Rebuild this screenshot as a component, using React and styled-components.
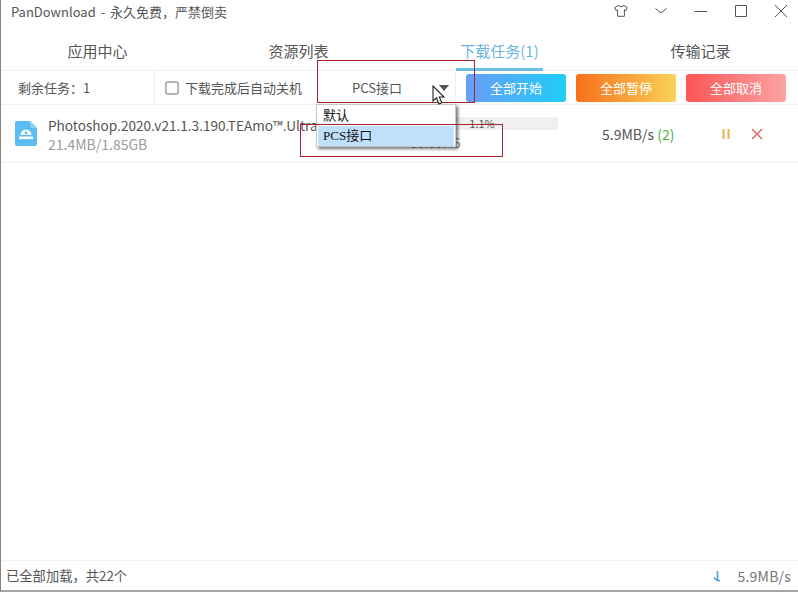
import React from "react";
import styled, { createGlobalStyle } from "styled-components";

const GlobalStyle = createGlobalStyle`
  html, body {
    margin: 0;
    padding: 0;
    background: #fff;
  }
  * {
    box-sizing: border-box;
  }
`;

const tabs = [
  { label: "应用中心" },
  { label: "资源列表" },
  { label: "下载任务(1)", active: true },
  { label: "传输记录" },
];

const bulkActions = [
  { label: "全部开始", from: "#6a9cf5", to: "#1fcdf8" },
  { label: "全部暂停", from: "#f96f1b", to: "#f9d258" },
  { label: "全部取消", from: "#fb5555", to: "#fda3a3" },
];

function App() {
  return (
    <Window>
      <GlobalStyle />
      <TitleBar>
        <Title>PanDownload - 永久免费，严禁倒卖</Title>
        <WindowControls>
          <ControlIcon viewBox="0 0 16 16" width="16" height="16">
            <path d="M5 2.5 L1.8 4.6 L3 7.5 L4.6 6.8 V13.3 H11.4 V6.8 L13 7.5 L14.2 4.6 L11 2.5 Q8 5 5 2.5 Z" />
          </ControlIcon>
          <ControlIcon viewBox="0 0 16 16" width="16" height="16">
            <path d="M2.5 5.5 L8 10 L13.5 5.5" />
          </ControlIcon>
          <ControlIcon viewBox="0 0 16 16" width="16" height="16">
            <path d="M1.5 8.5 H14" />
          </ControlIcon>
          <ControlIcon viewBox="0 0 16 16" width="16" height="16">
            <path d="M2.5 2.5 H13.5 V13.5 H2.5 Z" />
          </ControlIcon>
          <ControlIcon viewBox="0 0 16 16" width="16" height="16">
            <path d="M2 2 L14 14 M14 2 L2 14" />
          </ControlIcon>
        </WindowControls>
      </TitleBar>

      <TabBar>
        {tabs.map((tab) => (
          <Tab key={tab.label} $active={tab.active}>
            <TabLabel $active={tab.active}>{tab.label}</TabLabel>
          </Tab>
        ))}
      </TabBar>

      <Toolbar>
        <Remaining>剩余任务：1</Remaining>
        <ShutdownOption>
          <CheckBox />
          下载完成后自动关机
        </ShutdownOption>
        <SourceSelect>
          <SourceValue>PCS接口</SourceValue>
          <SelectArrow />
        </SourceSelect>
        <Actions>
          {bulkActions.map((action) => (
            <ActionButton key={action.label} $from={action.from} $to={action.to}>
              {action.label}
            </ActionButton>
          ))}
        </Actions>
      </Toolbar>

      <TaskRow>
        <FileIcon viewBox="0 0 22 25" width="22" height="25">
          <path
            d="M2 0 H15 L22 7 V23 Q22 25 20 25 H2 Q0 25 0 23 V2 Q0 0 2 0 Z"
            fill="#5cbdf3"
          />
          <path d="M15 0 L22 7 H17 Q15 7 15 5 Z" fill="#8dd3f8" />
          <path d="M5.5 14 A5.5 5.5 0 0 1 16.5 14 Z" fill="#fff" />
          <rect x="4" y="15.5" width="14" height="2.6" fill="#fff" />
          <circle cx="11" cy="12" r="1.4" fill="#5cbdf3" />
        </FileIcon>
        <FileInfo>
          <FileName>Photoshop.2020.v21.1.3.190.TEAmo™.UltraEdit.Setup.x64</FileName>
          <FileSize>21.4MB/1.85GB</FileSize>
        </FileInfo>
        <ProgressColumn>
          <ProgressTrack>
            <ProgressFill style={{ width: "1.1%" }} />
            <ProgressText>1.1%</ProgressText>
          </ProgressTrack>
          <TimeLeft>00:00:46</TimeLeft>
        </ProgressColumn>
        <Speed>
          5.9MB/s <Peers>(2)</Peers>
        </Speed>
        <RowActions>
          <RowIcon viewBox="0 0 12 12" width="12" height="12" $color="#eeb04e">
            <path d="M3.5 1 V11 M8.5 1 V11" />
          </RowIcon>
          <CancelIcon viewBox="0 0 12 12" width="12" height="12" $color="#ea6a6a">
            <path d="M1 1 L11 11 M11 1 L1 11" />
          </CancelIcon>
        </RowActions>
      </TaskRow>

      <Body />

      <StatusBar>
        <StatusText>已全部加载，共22个</StatusText>
        <StatusSpeed>
          <svg viewBox="0 0 10 12" width="10" height="12">
            <path
              d="M5.5 1 V10 M2 7.5 L5 10.5 H8"
              fill="none"
              stroke="#4aa3cf"
              strokeWidth="1.6"
            />
          </svg>
          <StatusValue>5.9MB/s</StatusValue>
        </StatusSpeed>
      </StatusBar>

      {/* 드롭다운 메뉴 */}
      <Dropdown>
        <DropdownItem>默认</DropdownItem>
        <DropdownItem $selected>PCS接口</DropdownItem>
      </Dropdown>

      {/* 빨간 표시 박스 */}
      <Mark $left={316} $top={60} $width={158} $height={43} />
      <Mark $left={299} $top={124} $width={203} $height={33} />

      <Cursor viewBox="0 0 14 22" width="14" height="22">
        <path
          d="M1 1 V16 L4.5 12.8 L7 19 L9.8 17.8 L7.3 12 H12 Z"
          fill="#fff"
          stroke="#222"
          strokeWidth="1.1"
        />
      </Cursor>
    </Window>
  );
}

const Window = styled.div`
  position: relative;
  width: 798px;
  height: 592px;
  display: flex;
  flex-direction: column;
  overflow: hidden;
  background: #fff;
  border-left: 1px solid #8d7f72;
  border-bottom: 2px solid #a5a5a5;
  font-family: "Noto Sans CJK SC", "Open Sans", sans-serif;
  color: #555;
`;

const TitleBar = styled.div`
  height: 30px;
  flex: none;
  display: flex;
  align-items: center;
  justify-content: space-between;
  padding: 0 9px 8px 10px;
`;

const Title = styled.div`
  font-size: 13px;
  word-spacing: 2px;
  color: #555;
`;

const WindowControls = styled.div`
  display: flex;
  align-items: center;
  gap: 24px;
`;

const ControlIcon = styled.svg`
  fill: none;
  stroke: #555;
  stroke-width: 1;
`;

const TabBar = styled.div`
  height: 41px;
  flex: none;
  margin-left: -4px;
  display: grid;
  grid-template-columns: repeat(4, 201px);
  border-bottom: 1px solid #efefef;
`;

const Tab = styled.div`
  display: flex;
  justify-content: center;
  font-size: 15px;
  color: ${(props) => (props.$active ? "#6db5e0" : "#555")};
`;

const TabLabel = styled.div`
  width: 87px;
  height: 41px;
  text-align: center;
  line-height: 41px;
  border-bottom: ${(props) => (props.$active ? "3px solid #6bbfe6" : "none")};
`;

const Toolbar = styled.div`
  height: 34px;
  flex: none;
  display: flex;
  align-items: center;
  border-bottom: 1px solid #efefef;
  font-size: 13px;
`;

const Remaining = styled.div`
  width: 154px;
  height: 100%;
  flex: none;
  display: flex;
  align-items: center;
  padding-left: 17px;
  border-right: 1px solid #efefef;
`;

const ShutdownOption = styled.label`
  width: 165px;
  flex: none;
  display: flex;
  align-items: center;
  gap: 6px;
  padding-left: 10px;
`;

const CheckBox = styled.span`
  width: 14px;
  height: 14px;
  flex: none;
  border: 2px solid #b5b5b5;
  border-radius: 2px;
`;

const SourceSelect = styled.div`
  width: 136px;
  height: 100%;
  flex: none;
  display: flex;
  align-items: center;
  justify-content: space-between;
  padding: 0 6px 0 32px;
  border-right: 1px solid #efefef;
`;

const SourceValue = styled.span`
  color: #555;
`;

const SelectArrow = styled.span`
  width: 0;
  height: 0;
  border-left: 5px solid transparent;
  border-right: 5px solid transparent;
  border-top: 6px solid #555;
`;

const Actions = styled.div`
  display: flex;
  gap: 10px;
  padding-left: 10px;
`;

const ActionButton = styled.div`
  width: 100px;
  height: 28px;
  border-radius: 3px;
  display: flex;
  align-items: center;
  justify-content: center;
  color: #fff;
  font-size: 13px;
  background: linear-gradient(90deg, ${(props) => props.$from}, ${(props) => props.$to});
`;

const TaskRow = styled.div`
  height: 58px;
  flex: none;
  display: flex;
  align-items: center;
  padding-left: 14px;
  border-bottom: 1px solid #efefef;
`;

const FileIcon = styled.svg`
  flex: none;
  margin-right: 11px;
`;

const FileInfo = styled.div`
  width: 340px;
  flex: none;
  overflow: hidden;
`;

const FileName = styled.div`
  font-size: 13.6px;
  line-height: 20px;
  white-space: nowrap;
  overflow: hidden;
  color: #555;
`;

const FileSize = styled.div`
  font-size: 14px;
  line-height: 18px;
  color: #9b9b9b;
`;

const ProgressColumn = styled.div`
  width: 152px;
  flex: none;
  margin-left: 18px;
  margin-top: 2px;
`;

const ProgressTrack = styled.div`
  position: relative;
  height: 13px;
  background: #f0f0f0;
  margin-bottom: 4px;
`;

const ProgressFill = styled.div`
  height: 100%;
  background: #6bbfe6;
`;

const ProgressText = styled.div`
  position: absolute;
  inset: 0;
  text-align: center;
  font-size: 11px;
  line-height: 13px;
  color: #555;
`;

const TimeLeft = styled.div`
  font-size: 13px;
  line-height: 18px;
  color: #888;
  padding-left: 4px;
`;

const Speed = styled.div`
  width: 116px;
  flex: none;
  padding-left: 44px;
  white-space: nowrap;
  font-size: 14px;
  color: #555;
`;

const Peers = styled.span`
  color: #4cb050;
`;

const RowActions = styled.div`
  display: flex;
  gap: 19px;
  margin-left: 46px;
`;

const RowIcon = styled.svg`
  fill: none;
  stroke: ${(props) => props.$color};
  stroke-width: 2;
`;

const CancelIcon = styled(RowIcon)`
  stroke-width: 1.6;
`;

const Body = styled.div`
  flex: 1;
`;

const StatusBar = styled.div`
  height: 30px;
  flex: none;
  display: flex;
  align-items: center;
  justify-content: space-between;
  padding: 0 7px 0 5px;
  border-top: 1px solid #f2f2f2;
  color: #555;
`;

const StatusText = styled.span`
  font-size: 13.3px;
`;

const StatusSpeed = styled.div`
  display: flex;
  align-items: center;
  gap: 16px;
`;

const StatusValue = styled.span`
  font-size: 14px;
  letter-spacing: 0.2px;
  color: #777;
`;

const Dropdown = styled.div`
  position: absolute;
  left: 315px;
  top: 104px;
  width: 140px;
  height: 43px;
  padding: 1px;
  background: #fff;
  border: 1px solid #c8c8c8;
  box-shadow: 2px 2px 3px rgba(0, 0, 0, 0.55);
  font-family: "Liberation Serif", "Noto Sans CJK SC", serif;
  font-size: 13px;
  color: #111;
`;

const DropdownItem = styled.div`
  height: 20px;
  line-height: 20px;
  padding-left: 5px;
  background: ${(props) => (props.$selected ? "#bfdffb" : "transparent")};
`;

const Mark = styled.div`
  position: absolute;
  left: ${(props) => props.$left}px;
  top: ${(props) => props.$top}px;
  width: ${(props) => props.$width}px;
  height: ${(props) => props.$height}px;
  border: 1px solid #a3262f;
  pointer-events: none;
`;

const Cursor = styled.svg`
  position: absolute;
  left: 431px;
  top: 85px;
`;

export default App;
